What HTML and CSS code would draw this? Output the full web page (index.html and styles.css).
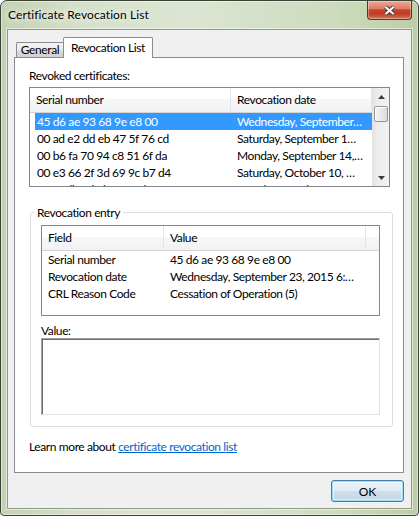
FILE: index.html
```html
<!DOCTYPE html>
<html lang="en">
<head>
<meta charset="utf-8">
<title>Certificate Revocation List</title>
<link rel="stylesheet" href="styles.css">
</head>
<body>
<div class="window">
  <header class="titlebar">
    <span class="title">Certificate Revocation List</span>
    <button class="close-btn" aria-label="Close">
      <svg width="13" height="11" viewBox="0 0 13 11">
        <path d="M2.5 2 L10.5 9 M10.5 2 L2.5 9" stroke="#3a3a3a" stroke-width="4" fill="none"/>
        <path d="M2.5 2 L10.5 9 M10.5 2 L2.5 9" stroke="#ffffff" stroke-width="2.2" fill="none"/>
      </svg>
    </button>
  </header>

  <main class="client">
    <nav class="tabs">
      <div class="tab">General</div>
      <div class="tab tab-active">Revocation List</div>
    </nav>

    <section class="panel">
      <div class="label">Revoked certificates:</div>
      <div class="listview certs">
        <div class="lv-body">
          <div class="lv-head">
            <div class="hcol serial-col">Serial number</div>
            <div class="hcol date-col">Revocation date</div>
          </div>
          <div class="lv-row selected"><span class="cell serial-cell">45 d6 ae 93 68 9e e8 00</span><span class="cell date-cell">Wednesday, September…</span></div>
          <div class="lv-row"><span class="cell serial-cell">00 ad e2 dd eb 47 5f 76 cd</span><span class="cell date-cell">Saturday, September 1…</span></div>
          <div class="lv-row"><span class="cell serial-cell">00 b6 fa 70 94 c8 51 6f da</span><span class="cell date-cell">Monday, September 14,…</span></div>
          <div class="lv-row"><span class="cell serial-cell">00 e3 66 2f 3d 69 9c b7 d4</span><span class="cell date-cell">Saturday, October 10, …</span></div>
          <div class="lv-row"><span class="cell serial-cell">01 1f db 4d 2b 76 af d8</span><span class="cell date-cell">Tuesday, October 13, …</span></div>
        </div>
        <div class="vscroll">
          <div class="sb-btn">
            <svg width="7" height="4" viewBox="0 0 7 4"><polygon points="0,4 3.5,0 7,4" fill="#3c3c3c"/></svg>
          </div>
          <div class="sb-track"><div class="sb-thumb"></div></div>
          <div class="sb-btn">
            <svg width="7" height="4" viewBox="0 0 7 4"><polygon points="0,0 7,0 3.5,4" fill="#3c3c3c"/></svg>
          </div>
        </div>
      </div>

      <fieldset class="group">
        <legend class="group-title">Revocation entry</legend>
        <div class="listview entry">
          <div class="lv-body">
            <div class="lv-head">
              <div class="hcol field-col">Field</div>
              <div class="hcol value-col">Value</div>
              <div class="hcol filler-col"></div>
            </div>
            <div class="lv-row"><span class="cell field-cell">Serial number</span><span class="cell value-cell">45 d6 ae 93 68 9e e8 00</span></div>
            <div class="lv-row"><span class="cell field-cell">Revocation date</span><span class="cell value-cell">Wednesday, September 23, 2015 6:…</span></div>
            <div class="lv-row"><span class="cell field-cell">CRL Reason Code</span><span class="cell value-cell">Cessation of Operation (5)</span></div>
          </div>
        </div>
        <div class="label value-label">Value:</div>
        <div class="value-box"></div>
      </fieldset>

      <div class="learn">Learn more about <a href="#">certificate revocation list</a></div>
    </section>

    <div class="actions">
      <button class="ok">OK</button>
    </div>
  </main>
</div>
</body>
</html>
```

FILE: styles.css
```css
* {
  box-sizing: border-box;
}

body {
  margin: 0;
  background: #ffffff;
  font-family: Lato, "Noto Sans", sans-serif;
  font-size: 12px;
  line-height: 15px;
  letter-spacing: -0.4px;
  color: #000000;
}

/* window frame */
.window {
  width: 419px;
  height: 516px;
  border: 1px solid #3a4336;
  border-radius: 7px 7px 4px 4px;
  background: linear-gradient(to right, #c4d2b3 0%, #d6e0ca 20%, #dce5d1 45%, #cddbbe 80%, #bccea5 100%);
  box-shadow: inset 0 0 0 1px rgba(255, 255, 255, 0.45);
  display: flex;
  flex-direction: column;
  overflow: hidden;
}

.titlebar {
  flex: none;
  height: 28px;
  display: flex;
  align-items: flex-start;
  padding: 0 6px 0 7px;
}

.title {
  margin-top: 6px;
  letter-spacing: 0.1px;
  text-shadow: 0 0 6px #ffffff, 0 0 10px rgba(255, 255, 255, 0.9);
}

.close-btn {
  margin-left: auto;
  width: 45px;
  height: 19px;
  padding: 0;
  border: 1px solid #6a2d22;
  border-top: none;
  border-radius: 0 0 4px 4px;
  background: linear-gradient(#e9a898 0%, #df7d66 42%, #c8432a 50%, #c03d25 72%, #d8775b 100%);
  box-shadow: inset 0 0 0 1px rgba(255, 255, 255, 0.35);
  display: flex;
  align-items: center;
  justify-content: center;
}

/* dialog client area */
.client {
  flex: none;
  height: 480px;
  margin: 0 6px;
  border: 1px solid #8f9a89;
  box-shadow: 0 0 0 1px rgba(255, 255, 255, 0.5);
  background: #f0f0f0;
  padding: 7px 7px 0 6px;
  display: flex;
  flex-direction: column;
}

/* tabs */
.tabs {
  position: relative;
  z-index: 1;
  display: flex;
  align-items: flex-end;
  height: 20px;
  padding-left: 2px;
}

.tab {
  width: 47px;
  height: 15px;
  border: 1px solid #898c95;
  border-right: none;
  border-bottom: none;
  border-radius: 2px 0 0 0;
  background: linear-gradient(#f3f3f3 0%, #ebebeb 50%, #dedede 51%, #d0d0d0 100%);
  text-align: center;
  line-height: 14px;
  white-space: nowrap;
}

.tab-active {
  width: 90px;
  height: 21px;
  margin-bottom: -1px;
  padding-top: 2px;
  border-right: 1px solid #898c95;
  border-radius: 2px 2px 0 0;
  background: #ffffff;
  line-height: 15px;
}

.panel {
  flex: none;
  height: 416px;
  border: 1px solid #898c95;
  background: #ffffff;
  padding: 10px 0 0 14px;
}

/* list views */
.listview {
  border: 1px solid #828790;
  background: #ffffff;
  display: flex;
  overflow: hidden;
}

.lv-body {
  flex: 1;
  min-width: 0;
  overflow: hidden;
}

.lv-head {
  display: flex;
  height: 25px;
  border-bottom: 1px solid #d5d5d5;
  background: linear-gradient(#ffffff 0%, #ffffff 45%, #f6f7f8 46%, #f1f2f4 100%);
}

.hcol {
  flex: none;
  line-height: 24px;
  padding-left: 6px;
  border-right: 1px solid #e2e5e9;
  white-space: nowrap;
}

.lv-row {
  display: flex;
  height: 17px;
  line-height: 17px;
  white-space: nowrap;
}

.cell {
  flex: none;
  overflow: hidden;
}

.lv-row.selected {
  background: #3399ff;
  color: #ffffff;
}

.certs {
  width: 361px;
  height: 100px;
  margin-top: 4px;
}

.serial-col {
  width: 201px;
}

.date-col {
  width: 141px;
}

.certs .lv-row {
  margin-left: 5px;
}

.serial-cell {
  width: 196px;
  padding-left: 2px;
}

.date-cell {
  flex: 1;
  padding-left: 6px;
}

/* vertical scrollbar */
.vscroll {
  flex: none;
  width: 17px;
  display: flex;
  flex-direction: column;
  background: linear-gradient(to right, #e2e2e2 0%, #ececec 30%, #f3f3f3 100%);
}

.sb-btn {
  flex: none;
  height: 17px;
  display: flex;
  align-items: center;
  justify-content: center;
  padding-left: 1px;
}

.sb-track {
  flex: 1;
}

.sb-thumb {
  height: 16px;
  margin: 1px 1px 0 2px;
  border: 1px solid #979797;
  border-radius: 2px;
  background: linear-gradient(to right, #f5f5f5 0%, #e8e8e8 50%, #dadada 100%);
  box-shadow: inset 1px 1px 0 #ffffff;
}

/* revocation entry group */
.group {
  margin: 18px 0 0 1px;
  width: 363px;
  padding: 5px 12px 11px 10px;
  border: 1px solid #d5dfe5;
  border-radius: 3px;
}

.group-title {
  margin-left: -7px;
  padding: 0 3px;
  line-height: 15px;
}

.entry {
  height: 91px;
}

.field-col {
  width: 122px;
}

.value-col {
  width: 202px;
}

.filler-col {
  flex: 1;
  border-right: none;
}

.field-cell {
  width: 122px;
  padding-left: 6px;
}

.value-cell {
  flex: 1;
  padding-left: 6px;
}

.value-label {
  margin-top: 7px;
}

.value-box {
  height: 77px;
  border: 1px solid;
  border-color: #a0a0a0 #e3e3e3 #e3e3e3 #a0a0a0;
  box-shadow: inset 1px 1px 0 #6d6d6d;
  background: #ffffff;
}

.learn {
  margin-top: 12px;
}

.learn a {
  color: #0066cc;
  text-decoration: underline;
}

/* buttons */
.actions {
  display: flex;
  justify-content: flex-end;
  margin-top: 7px;
}

.ok {
  width: 73px;
  height: 22px;
  padding: 0;
  font: inherit;
  color: #000000;
  border: 1px solid #3c7fb1;
  border-radius: 3px;
  background: linear-gradient(#eaf3f9 0%, #e0ebf3 48%, #cfdfea 52%, #c4d7e5 100%);
  box-shadow: inset 0 0 0 1px #9fdcf6, inset 0 0 0 2px rgba(255, 255, 255, 0.45);
}
```
